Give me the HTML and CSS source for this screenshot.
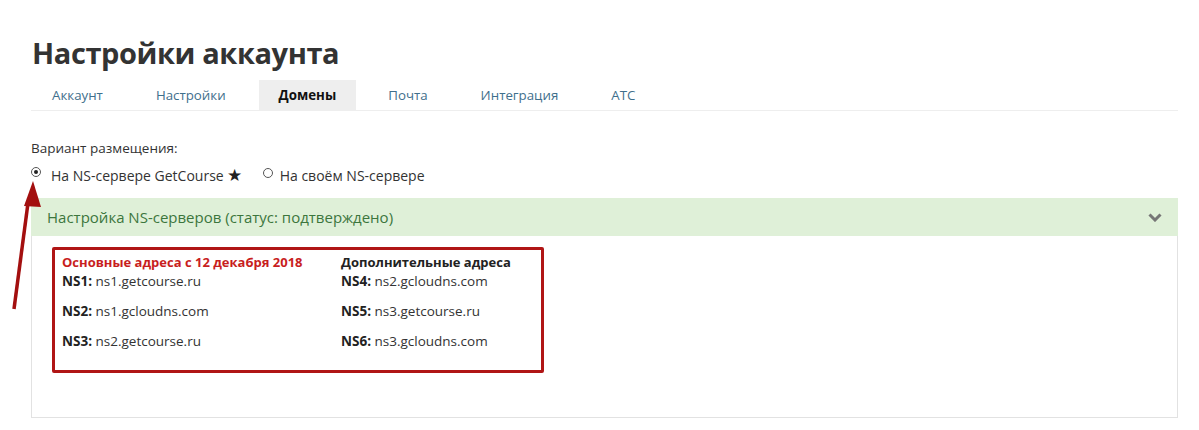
FILE: index.html
```html
<!DOCTYPE html>
<html lang="ru">
<head>
<meta charset="utf-8">
<title>Настройки аккаунта</title>
<link rel="stylesheet" href="styles.css">
</head>
<body>
<div class="page">
  <h1 class="title">Настройки аккаунта</h1>
  <ul class="tabs">
    <li class="tab">Аккаунт</li>
    <li class="tab">Настройки</li>
    <li class="tab active">Домены</li>
    <li class="tab">Почта</li>
    <li class="tab">Интеграция</li>
    <li class="tab">АТС</li>
  </ul>

  <div class="field-label">Вариант размещения:</div>
  <div class="radios">
    <label class="radio"><span class="dot checked"></span>На NS-сервере GetCourse <span class="star">★</span></label>
    <label class="radio"><span class="dot"></span>На своём NS-сервере</label>
  </div>

  <div class="panel">
    <div class="panel-head">
      <span>Настройка NS-серверов (статус: подтверждено)</span>
      <svg class="chevron" viewBox="0 0 14 9" width="14" height="9"><path d="M1.5 1.5 L7 7 L12.5 1.5" fill="none" stroke="#767676" stroke-width="3"/></svg>
    </div>
    <div class="panel-body">
      <div class="ns-box">
        <div class="ns-col">
          <div class="ns-head red">Основные адреса с 12 декабря 2018</div>
          <p class="ns"><b>NS1:</b> ns1.getcourse.ru</p>
          <p class="ns"><b>NS2:</b> ns1.gcloudns.com</p>
          <p class="ns"><b>NS3:</b> ns2.getcourse.ru</p>
        </div>
        <div class="ns-col">
          <div class="ns-head">Дополнительные адреса</div>
          <p class="ns"><b>NS4:</b> ns2.gcloudns.com</p>
          <p class="ns"><b>NS5:</b> ns3.getcourse.ru</p>
          <p class="ns"><b>NS6:</b> ns3.gcloudns.com</p>
        </div>
      </div>
    </div>
  </div>

  <svg class="arrow" width="60" height="140" viewBox="0 0 60 140">
    <path d="M14 130 L28 24" stroke="#a30f0f" stroke-width="3.5" fill="none"/>
    <polygon points="33,2 24,27 41,28" fill="#a30f0f"/>
  </svg>
</div>
</body>
</html>
```

FILE: styles.css
```css
* { box-sizing: border-box; }
body {
  margin: 0;
  background: #fff;
  font-family: "Open Sans", "Noto Sans", sans-serif;
  color: #333;
}
.page {
  position: relative;
  margin: 0 21px 0 31px;
  padding-top: 31px;
}
.title {
  margin: 0 0 5px 1px;
  font-size: 29px;
  line-height: 44px;
  font-weight: 700;
  color: #333;
  letter-spacing: -0.4px;
}
.tabs {
  list-style: none;
  margin: 0;
  padding: 0;
  display: flex;
  gap: 11px;
  border-bottom: 1px solid #eee;
  height: 31px;
}
.tab {
  padding: 0 21px;
  height: 30px;
  line-height: 30px;
  font-size: 13.3px;
  color: #3f6f8c;
}
.tab.active {
  background: #eee;
  color: #111;
  font-weight: 700;
  padding: 0 20px;
  margin-left: 1px;
}
.field-label {
  margin-top: 28px;
  font-size: 13.5px;
  line-height: 18px;
  color: #333;
}
.radios {
  display: flex;
  gap: 21px;
  margin-top: 9px;
  height: 32px;
}
.radio {
  display: flex;
  align-items: flex-start;
  font-size: 14px;
  line-height: 18px;
  color: #333;
  padding-top: 1px;
}
.dot {
  width: 10px;
  height: 10px;
  border: 1px solid #555;
  border-radius: 50%;
  margin: 1px 7px 0 0;
  position: relative;
  flex: none;
  background: #fff;
}
.radio:first-child .dot { margin-right: 10px; margin-top: 0; }
.dot.checked::after {
  content: "";
  position: absolute;
  left: 2px; top: 2px;
  width: 4px; height: 4px;
  border-radius: 50%;
  background: #222;
}
.star {
  font-size: 17px;
  line-height: 16px;
  color: #222;
  margin-left: 3px;
}
.panel-head {
  height: 38px;
  background: #dff0d8;
  color: #3c763d;
  font-size: 15px;
  display: flex;
  align-items: center;
  justify-content: space-between;
  padding: 0 16px;
}
.panel-body {
  border: 1px solid #e2e2e2;
  border-top: none;
  height: 182px;
  padding: 11px 20px;
}
.ns-box {
  width: 492px;
  border: 3px solid #b01515;
  border-radius: 2px;
  display: flex;
  padding: 3px 7px 8px;
}
.ns-col { width: 279px; }
.ns-col + .ns-col { width: auto; }
.ns-head {
  font-size: 13px;
  font-weight: 700;
  line-height: 19px;
  color: #222;
}
.ns-head.red { color: #c81e1e; }
.ns {
  margin: 0 0 11px;
  font-size: 13.5px;
  line-height: 19px;
  color: #333;
}
.ns b { color: #222; }
.arrow {
  position: absolute;
  left: -31px;
  top: 179px;
  overflow: visible;
}
```
